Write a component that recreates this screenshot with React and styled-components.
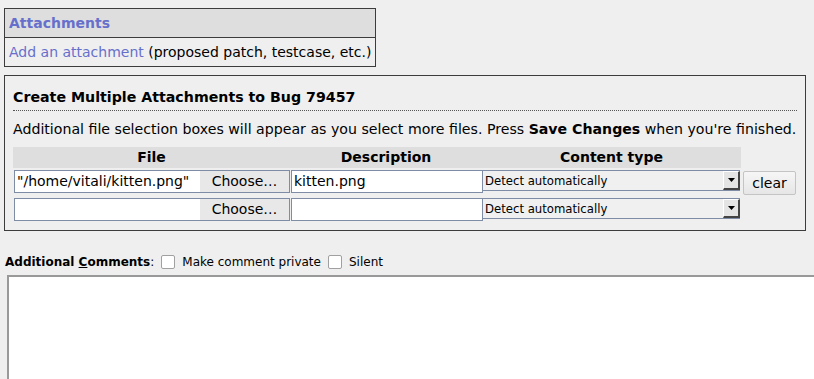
import React from "react";
import styled, { createGlobalStyle } from "styled-components";

const Global = createGlobalStyle`
  html, body { margin: 0; padding: 0; background: #efefef; }
  body {
    font-family: "DejaVu Sans", Verdana, sans-serif;
    font-size: 14px;
    color: #000;
    overflow: hidden;
  }
`;

const Page = styled.div`
  padding: 8px 0 0 4px;
  display: flex;
  flex-direction: column;
  align-items: flex-start;
`;

const AttachTable = styled.div`
  border: 1px solid #3c3c3c;
  display: flex;
  flex-direction: column;
`;

const AttachHead = styled.div`
  background: #dedede;
  height: 28px;
  line-height: 28px;
  padding: 0 4px;
  font-weight: bold;
  color: #6670cc;
  border-bottom: 1px solid #3c3c3c;
`;

const AttachRow = styled.div`
  height: 28px;
  line-height: 28px;
  padding: 0 4px;
`;

const Link = styled.a`
  color: #6670cc;
  text-decoration: none;
`;

const Box = styled.div`
  margin-top: 8px;
  width: 784px;
  border: 1px solid #3c3c3c;
  padding: 0 8px 9px 8px;
`;

const Title = styled.div`
  margin-top: 11px;
  line-height: 20px;
  padding-bottom: 3px;
  font-weight: bold;
  font-size: 14.2px;
  border-bottom: 1px dotted #555;
`;

const Intro = styled.div`
  margin-top: 9px;
  line-height: 18px;
  font-size: 14.15px;
  white-space: nowrap;
`;

const Grid = styled.div`
  margin-top: 9px;
  display: grid;
  grid-template-columns: 277px 192px 259px auto;
  grid-template-rows: 21px 26px 23px;
  row-gap: 2px;
  align-items: start;
`;

const HeadCell = styled.div`
  background: #dedede;
  height: 21px;
  line-height: 21px;
  text-align: center;
  font-weight: bold;
`;

const FileWidget = styled.div`
  margin-left: 1px;
  width: 276px;
  height: 23px;
  box-sizing: border-box;
  border: 1px solid #7f8ca6;
  display: flex;
`;

const FileName = styled.div`
  flex: 1;
  background: #fff;
  line-height: 21px;
  padding-left: 2px;
  white-space: nowrap;
  overflow: hidden;
`;

const Choose = styled.div`
  width: 89px;
  background: #e8e8e8;
  line-height: 21px;
  text-align: center;
`;

const TextInput = styled.div`
  margin-left: 1px;
  width: 192px;
  height: 23px;
  box-sizing: border-box;
  border: 1px solid #7f8ca6;
  background: #fff;
  line-height: 21px;
  padding-left: 2px;
`;

const Select = styled.div`
  width: 258px;
  height: 21px;
  box-sizing: border-box;
  border-left: 1px solid #7f8ca6;
  border-top: 1px solid #7f8ca6;
  border-bottom: 1px solid #7f8ca6;
  display: flex;
  align-items: center;
  font-size: 11.7px;
  background: #f0f0f0;
`;

const SelectText = styled.div`
  flex: 1;
  padding-left: 2px;
`;

const Arrow = styled.div`
  width: 17px;
  height: 19px;
  box-sizing: border-box;
  background: #e4e4e4;
  border-top: 1px solid #fff;
  border-left: 1px solid #fff;
  border-right: 2px solid #444;
  border-bottom: 2px solid #444;
  display: flex;
  align-items: center;
  justify-content: center;
`;

const ClearButton = styled.div`
  margin: 1px 0 0 2px;
  width: 53px;
  height: 24px;
  box-sizing: border-box;
  border: 1px solid #c4c4c4;
  border-radius: 2px;
  background: linear-gradient(#f6f6f6, #e6e6e6);
  font-size: 14px;
  line-height: 22px;
  text-align: center;
`;

const CommentsBar = styled.div`
  margin-top: 23px;
  margin-left: 1px;
  display: flex;
  align-items: center;
  font-size: 12px;
  height: 16px;
`;

const Label = styled.span`
  font-weight: bold;
  u { text-decoration: underline; }
`;

const Check = styled.span`
  display: inline-block;
  width: 14px;
  height: 14px;
  box-sizing: border-box;
  border: 1px solid #a0a0a0;
  border-radius: 2px;
  background: #fff;
  margin: 0 7px 0 7px;
`;

const TextArea = styled.div`
  margin-top: 5px;
  margin-left: 3px;
  width: 820px;
  height: 120px;
  background: #fff;
  border: 2px solid #999;
`;

const rows = [
  { file: "\"/home/vitali/kitten.png\"", desc: "kitten.png", clear: true },
  { file: "", desc: "", clear: false },
];

const Tri = () => (
  <svg width="7" height="4" viewBox="0 0 7 4">
    <path d="M0 0h7L3.5 4z" fill="#000" />
  </svg>
);

export default function App() {
  return (
    <>
      <Global />
      <Page>
        <AttachTable>
          <AttachHead>Attachments</AttachHead>
          <AttachRow>
            <Link href="#">Add an attachment</Link> (proposed patch, testcase, etc.)
          </AttachRow>
        </AttachTable>
        <Box>
          <Title>Create Multiple Attachments to Bug 79457</Title>
          <Intro>
            Additional file selection boxes will appear as you select more files. Press{" "}
            <b>Save Changes</b> when you're finished.
          </Intro>
          <Grid>
            <HeadCell>File</HeadCell>
            <HeadCell>Description</HeadCell>
            <HeadCell>Content type</HeadCell>
            <div />
            {rows.map((r, i) => (
              <React.Fragment key={i}>
                <FileWidget>
                  <FileName>{r.file}</FileName>
                  <Choose>Choose…</Choose>
                </FileWidget>
                <TextInput>{r.desc}</TextInput>
                <Select>
                  <SelectText>Detect automatically</SelectText>
                  <Arrow><Tri /></Arrow>
                </Select>
                {r.clear ? <ClearButton>clear</ClearButton> : <div />}
              </React.Fragment>
            ))}
          </Grid>
        </Box>
        <CommentsBar>
          <Label>Additional <u>C</u>omments</Label>:
          <Check />Make comment private
          <Check />Silent
        </CommentsBar>
        <TextArea />
      </Page>
    </>
  );
}
